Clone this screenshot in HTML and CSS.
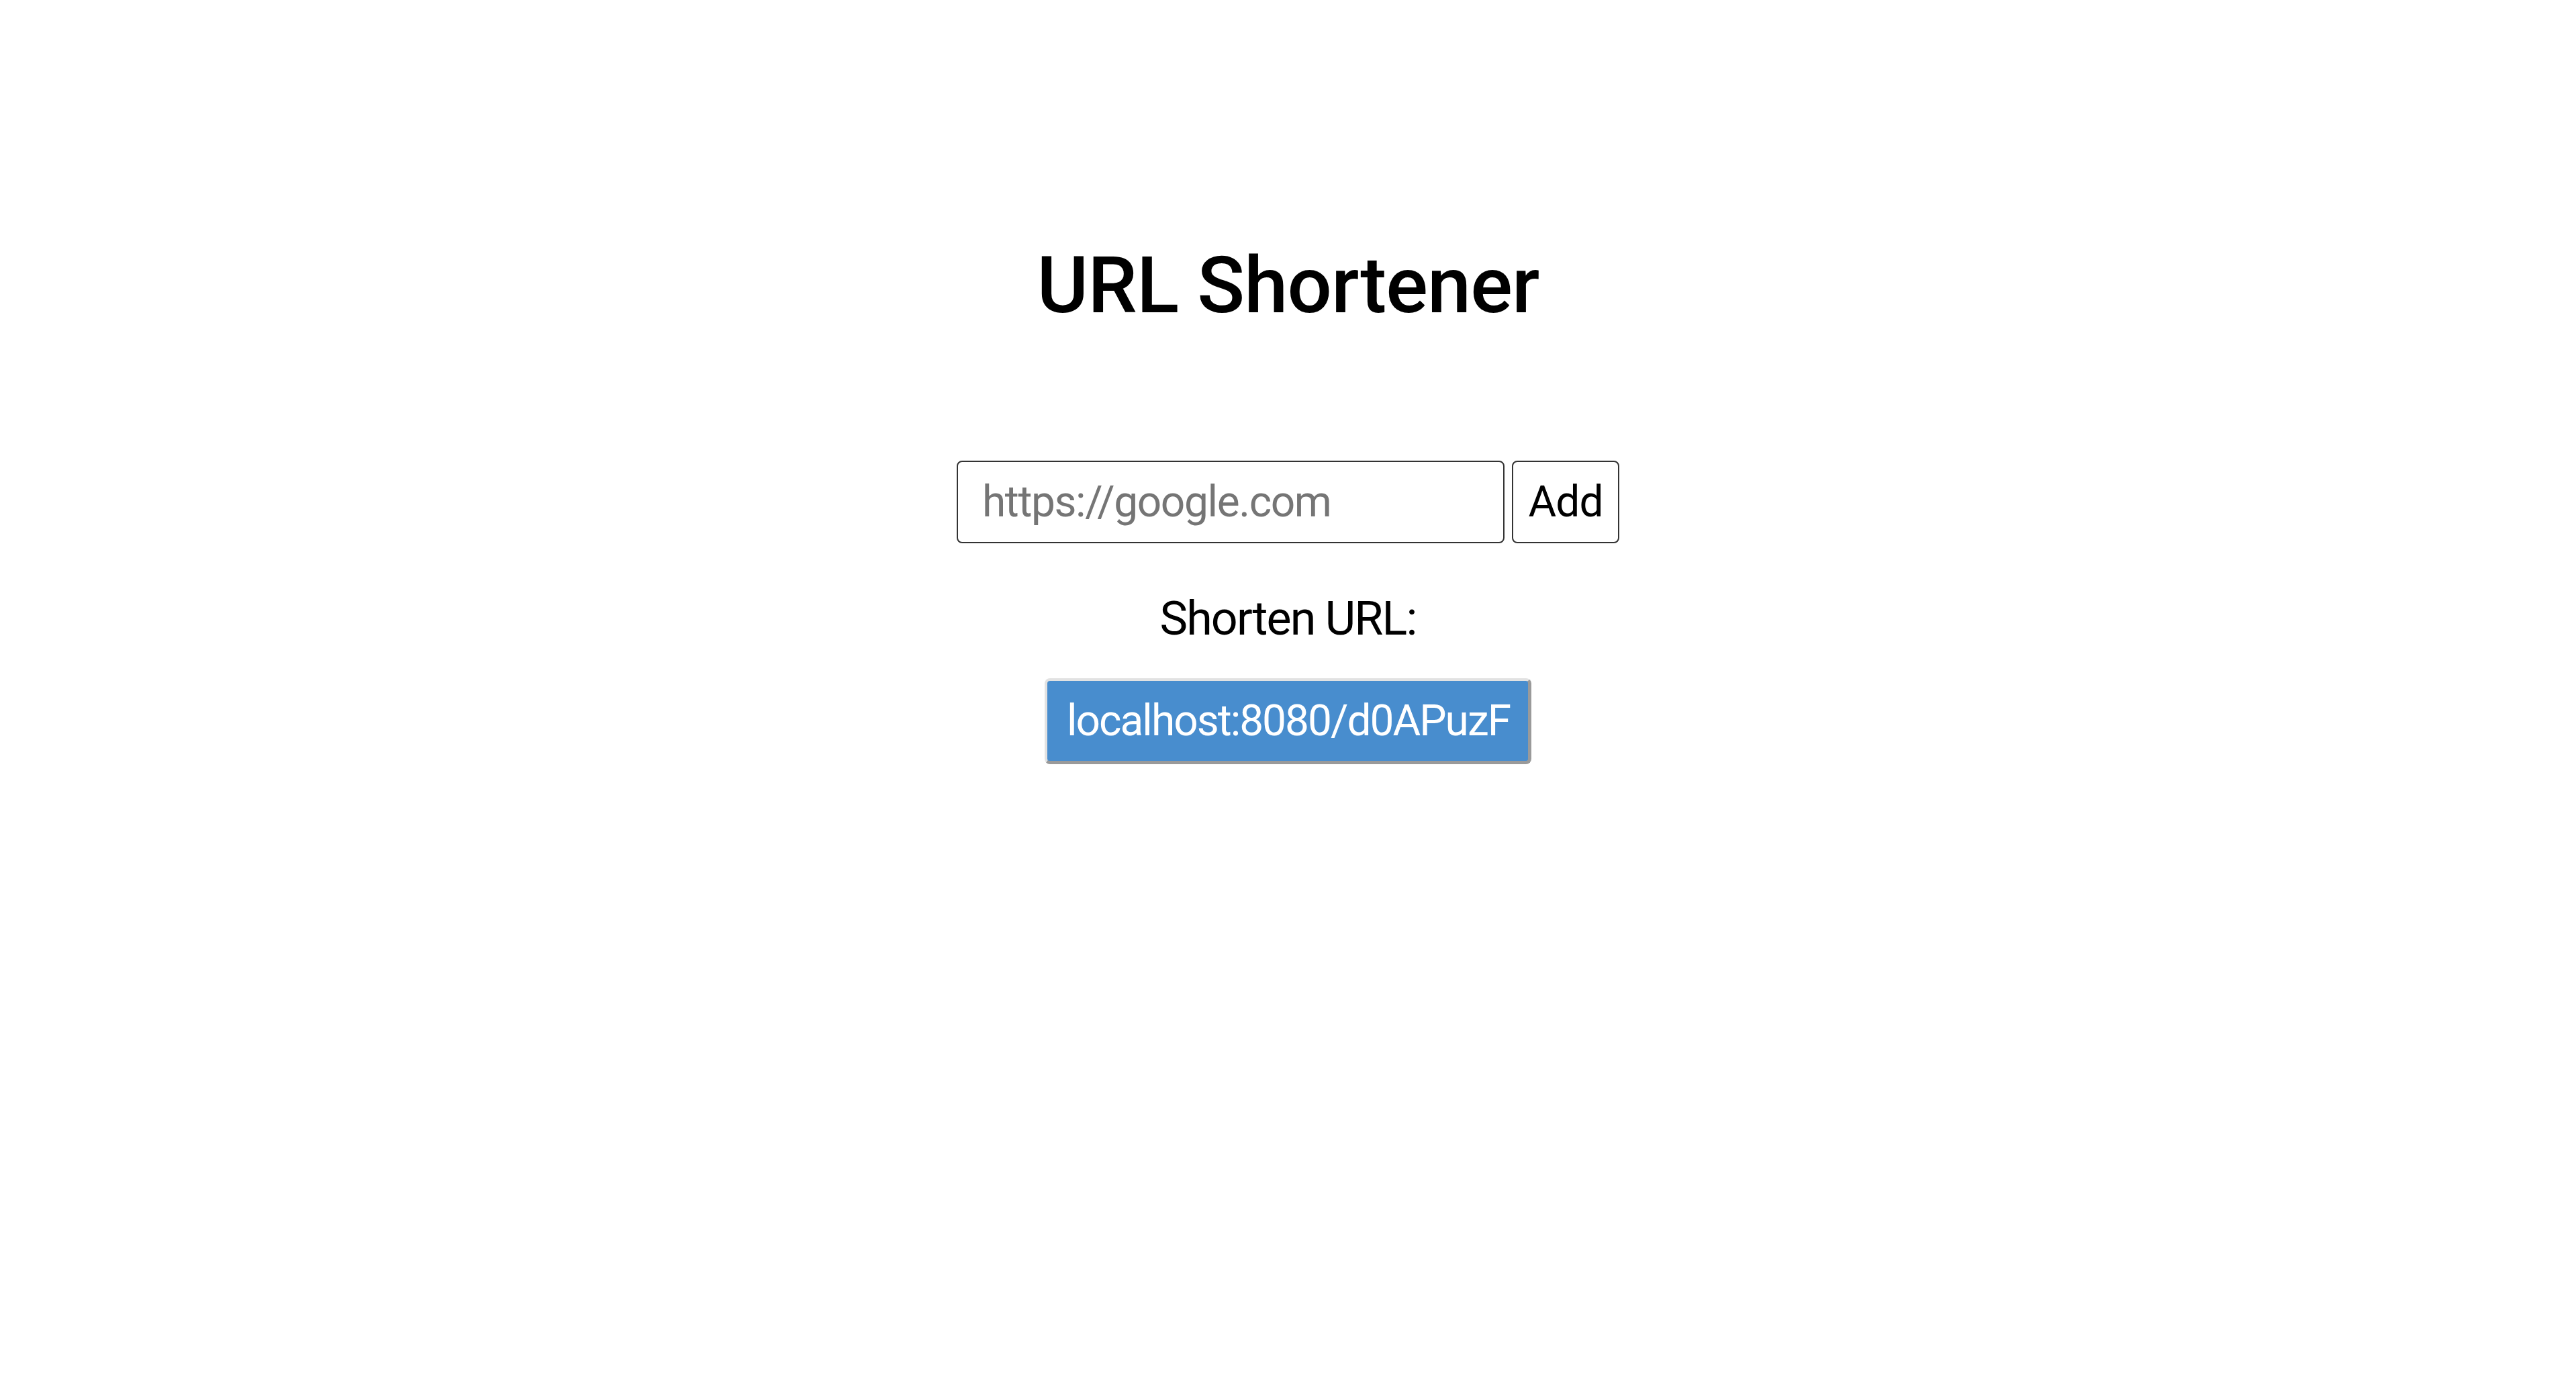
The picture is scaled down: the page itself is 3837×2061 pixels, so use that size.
FILE: index.html
```html
<!DOCTYPE html>
<html lang="en">
<head>
<meta charset="utf-8">
<title>URL Shortener</title>
<link rel="stylesheet" href="styles.css">
</head>
<body>
<main class="app">
  <h1 class="title">URL Shortener</h1>
  <form class="shorten-form">
    <input class="url-input" type="text" placeholder="https://google.com">
    <button class="add-btn" type="button">Add</button>
  </form>
  <p class="result-label">Shorten URL:</p>
  <button class="result-link" type="button">localhost:8080/d0APuzF</button>
</main>
</body>
</html>
```

FILE: styles.css
```css
html, body {
  margin: 0;
  padding: 0;
  background: #ffffff;
}

body {
  font-family: Roboto, "Liberation Sans", Arial, sans-serif;
  color: #000000;
}

.app {
  display: flex;
  flex-direction: column;
  align-items: center;
  padding-top: 356px;
}

.title {
  margin: 0;
  font-size: 117px;
  font-weight: 500;
  line-height: normal;
  letter-spacing: -0.9px;
}

.shorten-form {
  display: flex;
  gap: 11px;
  margin-top: 192px;
}

.url-input {
  box-sizing: border-box;
  width: 816px;
  height: 123px;
  padding: 0 36px;
  border: 2px solid #333333;
  border-radius: 8px;
  font-family: Roboto, "Liberation Sans", Arial, sans-serif;
  font-size: 64px;
  letter-spacing: -1.4px;
  color: #000000;
  background: #ffffff;
  outline: none;
}

.url-input::placeholder {
  color: #757575;
}

.add-btn {
  box-sizing: border-box;
  width: 160px;
  height: 123px;
  padding: 0;
  border: 2px solid #333333;
  border-radius: 8px;
  background: #ffffff;
  font-family: Roboto, "Liberation Sans", Arial, sans-serif;
  font-size: 64px;
  letter-spacing: -1px;
  color: #000000;
  cursor: pointer;
}

.result-label {
  margin: 71px 0 0;
  font-size: 70px;
  line-height: normal;
  letter-spacing: -1.9px;
}

.result-link {
  box-sizing: border-box;
  height: 128px;
  margin-top: 48px;
  padding: 0 27px 0 29px;
  border-width: 4px 5px 5px 4px;
  border-style: solid;
  border-color: #e2e2e2 #9a9a9a #9a9a9a #e2e2e2;
  border-radius: 8px;
  background: #488dce;
  color: #ffffff;
  font-family: Roboto, "Liberation Sans", Arial, sans-serif;
  font-size: 64px;
  letter-spacing: -2px;
  cursor: pointer;
}
```
